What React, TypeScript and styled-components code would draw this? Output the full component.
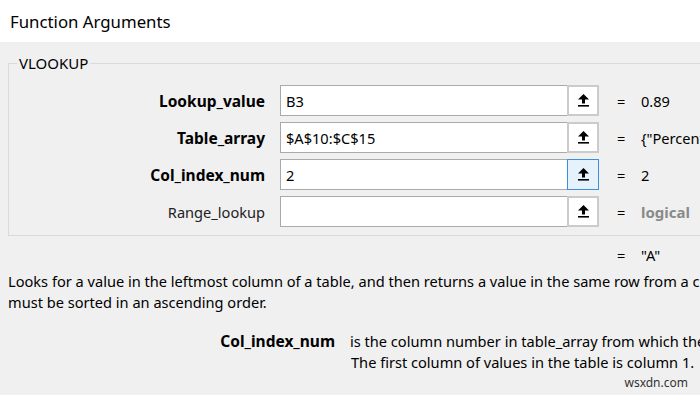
import React from "react";
import styled, { createGlobalStyle } from "styled-components";

const Global = createGlobalStyle`
  html, body { margin: 0; padding: 0; }
  body {
    background: #f0f0f0;
    font-family: "Noto Sans", "Open Sans", sans-serif;
    color: #000;
    width: 700px;
    height: 395px;
    overflow: hidden;
  }
`;

const Dialog = styled.div`
  width: 700px;
  height: 395px;
  overflow: hidden;
  display: flex;
  flex-direction: column;
`;

const TitleBar = styled.div`
  height: 42px;
  background: #ffffff;
  display: flex;
  align-items: center;
  padding-left: 10px;
  font-size: 16.8px;
  flex-shrink: 0;
`;

const Body = styled.div`
  padding-top: 11px;
  white-space: nowrap;
`;

const Group = styled.fieldset`
  margin: 0 0 0 8px;
  padding: 12px 0 8px 0;
  border: 1px solid #dadada;
  width: 760px;
  box-sizing: border-box;
`;

const Legend = styled.legend`
  margin-left: 8px;
  padding: 0 2px;
  font-size: 15px;
  line-height: 20px;
`;

const Rows = styled.div`
  display: flex;
  flex-direction: column;
  gap: 6px;
`;

const Row = styled.div`
  display: grid;
  grid-template-columns: 256px 15px 287px 32px 18px 24px 1fr;
  height: 31px;
  align-items: center;
`;

const Label = styled.div<{ $bold?: boolean }>`
  grid-column: 1;
  text-align: right;
  font-size: ${(p) => (p.$bold ? "15.5px" : "14.6px")};
  font-weight: ${(p) => (p.$bold ? 700 : 400)};
  color: ${(p) => (p.$bold ? "#000" : "#222")};
`;

const Input = styled.div`
  grid-column: 3;
  height: 31px;
  box-sizing: border-box;
  background: #fff;
  border: 1px solid #a9a9a9;
  border-right: none;
  padding-left: 5px;
  display: flex;
  align-items: center;
  font-size: 14.6px;
`;

const RefButton = styled.div<{ $active?: boolean }>`
  grid-column: 4;
  height: 31px;
  box-sizing: border-box;
  border: ${(p) => (p.$active ? "1px solid #3c8fd8" : "2px solid #cbcbcb")};
  background: ${(p) => (p.$active ? "#e5f1fb" : "#ffffff")};
  display: flex;
  align-items: center;
  justify-content: center;
`;

const Eq = styled.div`
  grid-column: 6;
  font-size: 14.6px;
`;

const Value = styled.div<{ $muted?: boolean }>`
  grid-column: 7;
  font-size: ${(p) => (p.$muted ? "15px" : "14.6px")};
  font-weight: ${(p) => (p.$muted ? 700 : 400)};
  color: ${(p) => (p.$muted ? "#8a8a8a" : "#000")};
  overflow: hidden;
`;

const ResultRow = styled(Row)`
  height: 20px;
  margin-top: 9px;
  grid-template-columns: 265px 15px 287px 32px 18px 24px 1fr;
`;

const Description = styled.div`
  margin-top: 6px;
  padding-left: 8px;
  font-size: 14.6px;
  line-height: 21px;
`;

const ArgHelp = styled.div`
  margin-top: 18px;
  display: grid;
  grid-template-columns: 335px 1fr;
  column-gap: 15px;
  font-size: 14.6px;
  line-height: 21px;
`;

const ArgName = styled.div`
  text-align: right;
  font-weight: 700;
  font-size: 15.5px;
`;

const ArgText = styled.div``;

const ArgLine = styled.div<{ $indent?: boolean }>`
  padding-left: ${(p) => (p.$indent ? "1px" : "0")};
`;

const Watermark = styled.div`
  display: flex;
  justify-content: flex-end;
  padding-right: 12px;
  margin-top: 1px;
  font-size: 12px;
  line-height: 18px;
  color: #333;
`;

const RefIcon = () => (
  <svg width="11" height="13" viewBox="0 0 11 13">
    <polygon points="5.5,0 0,5.5 11,5.5" fill="#000" />
    <rect x="4" y="5" width="3" height="4.5" fill="#000" />
    <rect x="0" y="11" width="11" height="1.6" fill="#000" />
  </svg>
);

const args = [
  { name: "Lookup_value", bold: true, input: "B3", value: "0.89" },
  { name: "Table_array", bold: true, input: "$A$10:$C$15", value: '{"Percent' },
  { name: "Col_index_num", bold: true, input: "2", value: "2", active: true },
  { name: "Range_lookup", bold: false, input: "", value: "logical", muted: true },
];

export default function App() {
  return (
    <Dialog>
      <Global />
      <TitleBar>Function Arguments</TitleBar>
      <Body>
        <Group>
          <Legend>VLOOKUP</Legend>
          <Rows>
            {args.map((a) => (
              <Row key={a.name}>
                <Label $bold={a.bold}>{a.name}</Label>
                <Input>{a.input}</Input>
                <RefButton $active={a.active}>
                  <RefIcon />
                </RefButton>
                <Eq>=</Eq>
                <Value $muted={a.muted}>{a.value}</Value>
              </Row>
            ))}
          </Rows>
        </Group>
        <ResultRow>
          <Eq>=</Eq>
          <Value>"A"</Value>
        </ResultRow>
        <Description>
          <div>
            Looks for a value in the leftmost column of a table, and then returns a value in the same row from a column you specify. By default, the table
          </div>
          <div>must be sorted in an ascending order.</div>
        </Description>
        <ArgHelp>
          <ArgName>Col_index_num</ArgName>
          <ArgText>
            <ArgLine>is the column number in table_array from which the matching value should be returned.</ArgLine>
            <ArgLine $indent>The first column of values in the table is column 1.</ArgLine>
          </ArgText>
        </ArgHelp>
        <Watermark>wsxdn.com</Watermark>
      </Body>
    </Dialog>
  );
}
